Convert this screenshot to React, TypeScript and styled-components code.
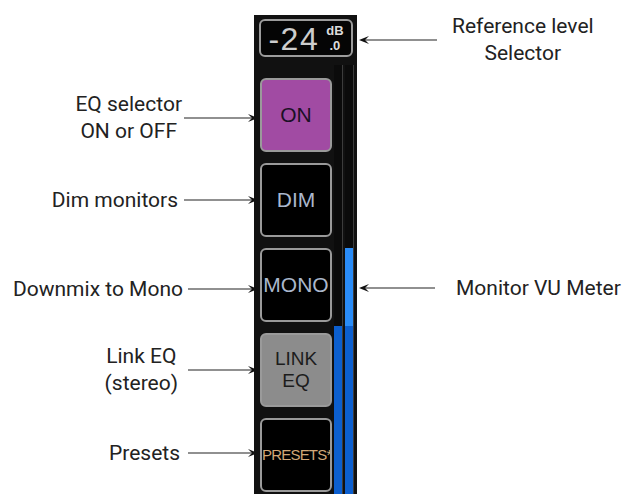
import React from 'react';
import styled, { createGlobalStyle } from 'styled-components';

const GlobalStyle = createGlobalStyle`
    html, body {
        margin: 0;
        padding: 0;
        background: #ffffff;
        overflow: hidden;
    }

    body {
        font-family: Roboto, "Liberation Sans", sans-serif;
    }
`;

const Page = styled.div`
    width: 625px;
    height: 494px;
    display: flex;
    align-items: flex-start;
    overflow: hidden;
`;

const LeftColumn = styled.div`
    width: 258px;
    margin-right: -4px;
    display: flex;
    flex-direction: column;
    position: relative;
    z-index: 1;
`;

const RightColumn = styled.div`
    flex: 1;
    margin-left: 2px;
    display: flex;
    flex-direction: column;
`;

const NoteRow = styled.div<{ $top: number }>`
    height: 54px;
    margin-top: ${(p) => p.$top}px;
    display: flex;
    align-items: center;
`;

const LeftRow = styled(NoteRow)`
    justify-content: flex-end;
`;

const Label = styled.div<{ $gap: number; $side: 'left' | 'right' }>`
    font-size: 21px;
    line-height: 27px;
    color: #222222;
    text-align: center;
    white-space: nowrap;
    ${(p) => (p.$side === 'left' ? `margin-right: ${p.$gap}px;` : `margin-left: ${p.$gap}px;`)}
`;

const Panel = styled.div`
    width: 103px;
    height: 479px;
    margin-top: 15px;
    padding-top: 4px;
    box-sizing: border-box;
    background: #111111;
    flex-shrink: 0;
`;

const RefBox = styled.div`
    width: 94px;
    height: 38px;
    margin-left: 5px;
    box-sizing: border-box;
    border: 2px solid #9c9c9c;
    border-radius: 6px;
    background: #050505;
    display: flex;
    align-items: center;
    justify-content: center;
    gap: 7px;
    font-family: "Liberation Sans", Arial, sans-serif;
`;

const RefValue = styled.span`
    font-size: 32px;
    letter-spacing: 1.5px;
    line-height: 30px;
    color: #cdcdcd;
    margin-top: 2px;
`;

const RefUnits = styled.span`
    display: flex;
    flex-direction: column;
    align-items: center;
    font-size: 13px;
    font-weight: bold;
    line-height: 15px;
    color: #dcdcdc;
`;

const PanelBody = styled.div`
    display: flex;
    margin-top: 8px;
    height: 429px;
`;

const ButtonColumn = styled.div`
    width: 72px;
    margin-left: 6px;
    padding-top: 13px;
    display: flex;
    flex-direction: column;
    gap: 11px;
`;

const PanelButton = styled.div<{ $bg: string; $fg: string; $size: number; $squeeze?: boolean }>`
    width: 72px;
    height: 74px;
    flex-shrink: 0;
    box-sizing: border-box;
    border: 2px solid #9a9a9a;
    border-radius: 6px;
    background: ${(p) => p.$bg};
    color: ${(p) => p.$fg};
    font-family: "Liberation Sans", Arial, sans-serif;
    font-size: ${(p) => p.$size}px;
    letter-spacing: ${(p) => (p.$squeeze ? '-0.8px' : 'normal')};
    line-height: 22px;
    text-align: center;
    white-space: nowrap;
    overflow: hidden;
    display: flex;
    flex-direction: column;
    justify-content: center;
`;

const Meter = styled.div`
    margin-left: 2px;
    display: flex;
    gap: 2px;
    height: 100%;
`;

const MeterTrack = styled.div`
    width: 9px;
    box-sizing: border-box;
    background: #0b0b0b;
    border-right: 1px solid #3c3c3c;
    display: flex;
    flex-direction: column;
    justify-content: flex-end;
`;

const MeterFill = styled.div<{ $peak?: boolean }>`
    width: 8px;
    background: ${(p) => (p.$peak ? '#2a8cf7' : '#0c5fcf')};
`;

const ArrowSvg = styled.svg`
    display: block;
    flex-shrink: 0;
`;

interface ArrowProps {
    width: number;
    dir: 'left' | 'right';
}

const Arrow = ({ width, dir }: ArrowProps): React.ReactElement => {
    const tip = dir === 'right' ? width : 0;
    const back = dir === 'right' ? width - 10 : 10;
    const notch = dir === 'right' ? width - 6 : 6;
    const start = dir === 'right' ? 0 : width;
    return (
        <ArrowSvg width={width} height={10} viewBox={`0 0 ${width} 10`}>
            <line x1={start} y1={5} x2={notch} y2={5} stroke="#222" strokeWidth={1.2} />
            <path d={`M${tip} 5 L${back} 1 L${notch} 5 L${back} 9 Z`} fill="#111" />
        </ArrowSvg>
    );
};

const leftNotes = [
    { lines: ['EQ selector', 'ON or OFF'], top: 91, gap: 2, arrow: 74 },
    { lines: ['Dim monitors'], top: 28, gap: 6, arrow: 74 },
    { lines: ['Downmix to Mono'], top: 35, gap: 5, arrow: 70 },
    { lines: ['Link EQ', '(stereo)'], top: 27, gap: 10, arrow: 70 },
    { lines: ['Presets'], top: 29, gap: 8, arrow: 70 },
];

const rightNotes = [
    { lines: ['Reference level', 'Selector'], top: 13, gap: 15, arrow: 78 },
    { lines: ['Monitor VU Meter'], top: 194, gap: 21, arrow: 76 },
];

const buttons = [
    { lines: ['ON'], bg: '#a14ba3', fg: '#1b1026', size: 21 },
    { lines: ['DIM'], bg: '#000000', fg: '#aab7cc', size: 21 },
    { lines: ['MONO'], bg: '#000000', fg: '#aab7cc', size: 21 },
    { lines: ['LINK', 'EQ'], bg: '#8c8c8c', fg: '#1c1c1c', size: 19 },
    { lines: ['PRESETS*'], bg: '#000000', fg: '#d2a878', size: 15, squeeze: true },
];

const App = (): React.ReactElement => {
    return (
        <Page>
            <GlobalStyle />
            <LeftColumn>
                {leftNotes.map((note) => (
                    <LeftRow key={note.lines[0]} $top={note.top}>
                        <Label $side="left" $gap={note.gap}>
                            {note.lines.map((line) => (
                                <div key={line}>{line}</div>
                            ))}
                        </Label>
                        <Arrow width={note.arrow} dir="right" />
                    </LeftRow>
                ))}
            </LeftColumn>

            <Panel>
                <RefBox>
                    <RefValue>-24</RefValue>
                    <RefUnits>
                        <span>dB</span>
                        <span>.0</span>
                    </RefUnits>
                </RefBox>
                <PanelBody>
                    <ButtonColumn>
                        {buttons.map((b) => (
                            <PanelButton
                                key={b.lines[0]}
                                $bg={b.bg}
                                $fg={b.fg}
                                $size={b.size}
                                $squeeze={b.squeeze}
                            >
                                {b.lines.map((line) => (
                                    <div key={line}>{line}</div>
                                ))}
                            </PanelButton>
                        ))}
                    </ButtonColumn>
                    <Meter>
                        <MeterTrack>
                            <MeterFill style={{ height: 168 }} />
                        </MeterTrack>
                        <MeterTrack>
                            <MeterFill $peak style={{ height: 78 }} />
                            <MeterFill style={{ height: 168 }} />
                        </MeterTrack>
                    </Meter>
                </PanelBody>
            </Panel>

            <RightColumn>
                {rightNotes.map((note) => (
                    <NoteRow key={note.lines[0]} $top={note.top}>
                        <Arrow width={note.arrow} dir="left" />
                        <Label $side="right" $gap={note.gap}>
                            {note.lines.map((line) => (
                                <div key={line}>{line}</div>
                            ))}
                        </Label>
                    </NoteRow>
                ))}
            </RightColumn>
        </Page>
    );
};

export default App;
